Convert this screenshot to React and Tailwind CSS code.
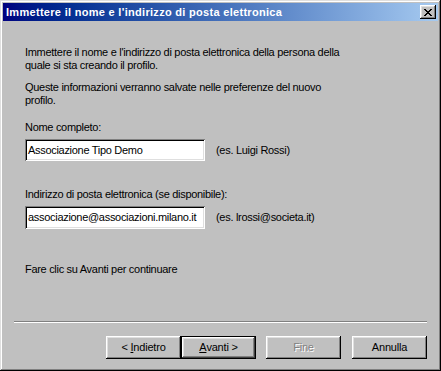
import React from "react";

const font = { fontFamily: '"Liberation Sans", Arial, sans-serif' };

function Btn({ children, primary, disabled, className = "" }) {
    const edge = primary
        ? "border border-black shadow-[inset_-1px_-1px_#404040,inset_1px_1px_#fff,inset_-2px_-2px_#808080,inset_2px_2px_#dfdfdf]"
        : "shadow-[inset_-1px_-1px_#000,inset_1px_1px_#fff,inset_-2px_-2px_#808080,inset_2px_2px_#dfdfdf]";
    return (
        <div
            className={`flex h-[23px] w-[75px] items-center justify-center bg-[#c0c0c0] text-[11px] tracking-[-0.2px] ${edge} ${
                disabled ? "text-[#808080] [text-shadow:1px_1px_0_#fff]" : "text-black"
            } ${className}`}
        >
            {children}
        </div>
    );
}

function Field({ value, hint, height }) {
    return (
        <div className="flex items-center">
            <div
                className={`flex w-[180px] items-center overflow-hidden whitespace-nowrap bg-white pl-[3px] text-[11px] text-black shadow-[inset_1px_1px_#808080,inset_-1px_-1px_#fff,inset_2px_2px_#000,inset_-2px_-2px_#dfdfdf] ${height}`}
            >
                {value}
            </div>
            <span className="ml-[11px] text-[11px] text-black">{hint}</span>
        </div>
    );
}

export default function App() {
    return (
        <div
            style={font}
            className="flex h-[371px] w-[441px] flex-col bg-[#c0c0c0] p-[3px] shadow-[inset_-1px_-1px_#000,inset_1px_1px_#dfdfdf,inset_-2px_-2px_#808080,inset_2px_2px_#fff]"
        >
            {/* barra del titolo */}
            <div className="flex h-[18px] items-center justify-between bg-gradient-to-r from-[#000080] to-[#a6caf0] pl-[3px] pr-[2px]">
                <span className="text-[11px] font-bold tracking-[0.3px] text-white">
                    Immettere il nome e l'indirizzo di posta elettronica
                </span>
                <div className="flex h-[14px] w-[16px] items-center justify-center bg-[#c0c0c0] shadow-[inset_-1px_-1px_#000,inset_1px_1px_#fff,inset_-2px_-2px_#808080,inset_2px_2px_#dfdfdf]">
                    <svg width="8" height="7" viewBox="0 0 8 7" shapeRendering="crispEdges">
                        <path
                            fill="#000"
                            d="M0 0h2v1h-2zM6 0h2v1h-2zM1 1h2v1h-2zM5 1h2v1h-2zM2 2h4v1h-4zM3 3h2v1h-2zM2 4h4v1h-4zM1 5h2v1h-2zM5 5h2v1h-2zM0 6h2v1h-2zM6 6h2v1h-2z"
                        />
                    </svg>
                </div>
            </div>

            <div className="flex flex-1 flex-col pl-[22px] text-[11px] leading-[13px] tracking-[-0.3px] text-black">
                <p className="mt-[25px]">
                    Immettere il nome e l'indirizzo di posta elettronica della persona della
                    <br />
                    quale si sta creando il profilo.
                </p>
                <p className="mt-[9px]">
                    Queste informazioni verranno salvate nelle preferenze del nuovo
                    <br />
                    profilo.
                </p>
                <p className="mt-[14px]">Nome completo:</p>
                <div className="mt-[5px]">
                    <Field value="Associazione Tipo Demo" hint="(es. Luigi Rossi)" height="h-[22px]" />
                </div>
                <p className="mt-[27px]">Indirizzo di posta elettronica (se disponibile):</p>
                <div className="mt-[5px]">
                    <Field
                        value="associazione@associazioni.milano.it"
                        hint="(es. lrossi@societa.it)"
                        height="h-[23px]"
                    />
                </div>
                <p className="mt-[34px]">Fare clic su Avanti per continuare</p>
            </div>

            {/* separatore e pulsanti */}
            <div className="mx-[11px] h-[2px] border-t border-[#808080] border-b border-b-white" />
            <div className="flex justify-end pr-[11px] pt-[13px] pb-[9px]">
                <Btn>
                    &lt;&nbsp;<span className="underline">I</span>ndietro
                </Btn>
                <Btn primary>
                    <span className="underline">A</span>vanti &gt;
                </Btn>
                <Btn disabled className="ml-[10px]">
                    Fine
                </Btn>
                <Btn className="ml-[11px]">Annulla</Btn>
            </div>
        </div>
    );
}
